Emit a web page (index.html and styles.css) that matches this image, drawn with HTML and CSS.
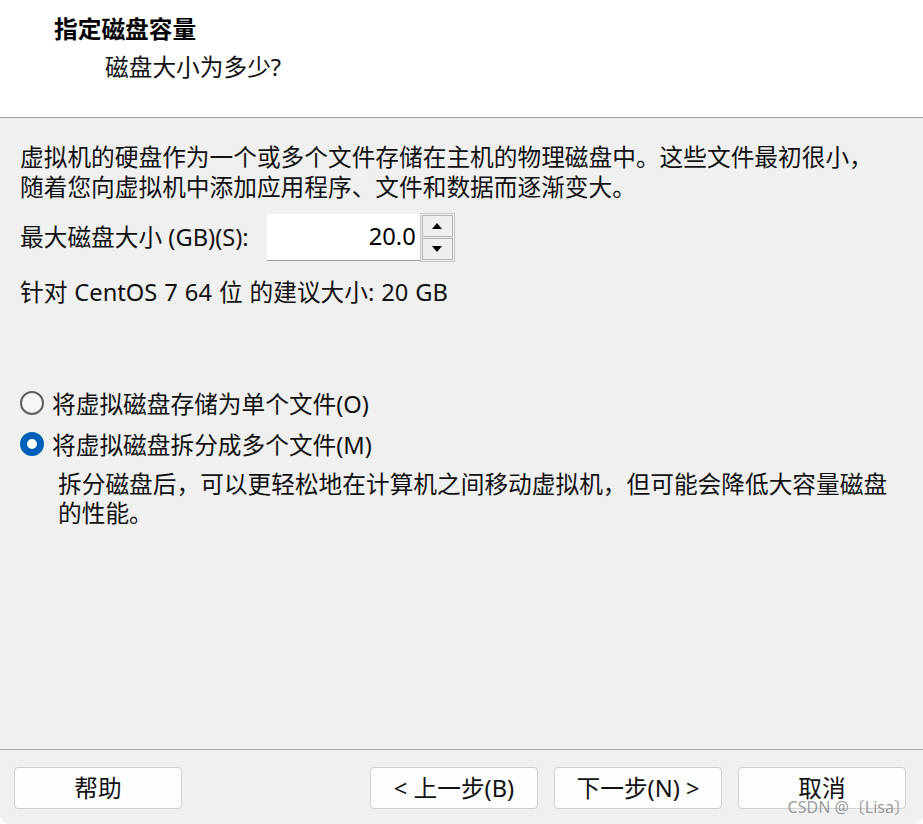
FILE: index.html
```html
<!DOCTYPE html>
<html lang="zh-CN">
<head>
<meta charset="utf-8">
<title>指定磁盘容量</title>
<link rel="stylesheet" href="styles.css">
</head>
<body>
<div class="window">
  <header class="header">
    <div class="title">指定磁盘容量</div>
    <div class="subtitle">磁盘大小为多少?</div>
  </header>
  <main class="content">
    <p class="intro">虚拟机的硬盘作为一个或多个文件存储在主机的物理磁盘中。这些文件最初很小，<br>随着您向虚拟机中添加应用程序、文件和数据而逐渐变大。</p>
    <div class="size-row">
      <span class="label">最大磁盘大小 (GB)(S):</span>
      <div class="spin">
        <div class="spin-input">20.0</div>
        <div class="spin-buttons">
          <div class="spin-btn"><span class="tri-up"></span></div>
          <div class="spin-btn"><span class="tri-down"></span></div>
        </div>
      </div>
    </div>
    <p class="recommend">针对 CentOS 7 64 位 的建议大小: 20 GB</p>
    <div class="options">
      <div class="radio-row">
        <span class="radio"></span>
        <span>将虚拟磁盘存储为单个文件(O)</span>
      </div>
      <div class="radio-row">
        <span class="radio checked"></span>
        <span>将虚拟磁盘拆分成多个文件(M)</span>
      </div>
      <p class="desc">拆分磁盘后，可以更轻松地在计算机之间移动虚拟机，但可能会降低大容量磁盘<br>的性能。</p>
    </div>
  </main>
  <footer class="footer">
    <button class="btn">帮助</button>
    <div class="spacer"></div>
    <button class="btn">&lt; 上一步(B)</button>
    <button class="btn">下一步(N) &gt;</button>
    <button class="btn">取消</button>
    <span class="watermark">CSDN @〔Lisa〕</span>
  </footer>
</div>
</body>
</html>
```
FILE: styles.css
```css
* { box-sizing: border-box; }
html, body { margin: 0; padding: 0; background: #ffffff; }
body {
  font-family: "Noto Sans", "Noto Sans CJK SC", sans-serif;
  font-size: 23.7px;
  color: #111111;
}
.window {
  width: 923px;
  height: 824px;
  background: #f0f0f0;
  display: flex;
  flex-direction: column;
  border-radius: 0 0 9px 9px;
  overflow: hidden;
  position: relative;
}
.header {
  height: 118px;
  background: #ffffff;
  border-bottom: 1px solid #a0a0a0;
  padding-top: 14px;
  flex-shrink: 0;
}
.title {
  font-weight: bold;
  line-height: 30px;
  padding-left: 54px;
  color: #000;
}
.subtitle {
  line-height: 30px;
  margin-top: 8px;
  padding-left: 105px;
}
.content {
  flex: 1;
  padding: 0 20px;
}
.intro {
  margin: 24px 0 0;
  line-height: 30px;
  white-space: nowrap;
}
.size-row {
  display: flex;
  align-items: center;
  margin-top: 10px;
  height: 50px;
}
.label { line-height: 30px; }
.spin {
  display: flex;
  margin-left: 18px;
  align-items: center;
}
.spin-input {
  width: 153px;
  height: 47px;
  background: #ffffff;
  border-bottom: 1px solid #9a9a9a;
  text-align: right;
  padding-right: 4px;
  line-height: 44px;
  color: #000;
}
.spin-buttons {
  display: flex;
  flex-direction: column;
  gap: 1px;
  padding: 1px;
  border: 1px solid #c8c8c8;
  background: #f0f0f0;
}
.spin-btn {
  width: 31px;
  height: 22px;
  border: 1px solid #b4b4b4;
  background: #efefef;
  display: flex;
  align-items: center;
  justify-content: center;
}
.tri-up, .tri-down {
  width: 0;
  height: 0;
  border-left: 5px solid transparent;
  border-right: 5px solid transparent;
}
.tri-up { border-bottom: 6px solid #000; }
.tri-down { border-top: 6px solid #000; }
.recommend {
  margin: 15px 0 0;
  line-height: 30px;
  word-spacing: 0.8px;
}
.options { margin-top: 81px; }
.radio-row {
  display: flex;
  align-items: center;
  gap: 8px;
  height: 30px;
  margin-bottom: 11px;
}
.radio {
  width: 24px;
  height: 24px;
  border-radius: 50%;
  border: 2px solid #606060;
  background: #f7f7f7;
  flex-shrink: 0;
}
.radio.checked {
  border: 7px solid #005fb8;
  background: #ffffff;
}
.desc {
  margin: 2px 0 0 38px;
  line-height: 29px;
  white-space: nowrap;
}
.footer {
  flex-shrink: 0;
  border-top: 1px solid #a6a6a6;
  height: 75px;
  padding: 17px 17px 0 14px;
  display: flex;
  gap: 16px;
  position: relative;
}
.spacer { flex: 1; }
.btn {
  width: 168px;
  height: 42px;
  background: #fdfdfd;
  border: 1px solid #d0d0d0;
  border-radius: 4px;
  font: inherit;
  color: #111;
  padding: 0;
  line-height: 40px;
}
.watermark {
  position: absolute;
  right: 13px;
  bottom: 8px;
  font-family: "Noto Sans", "Noto Sans CJK SC", sans-serif;
  font-size: 16px;
  color: #9a9a9a;
  line-height: 18px;
}
```
